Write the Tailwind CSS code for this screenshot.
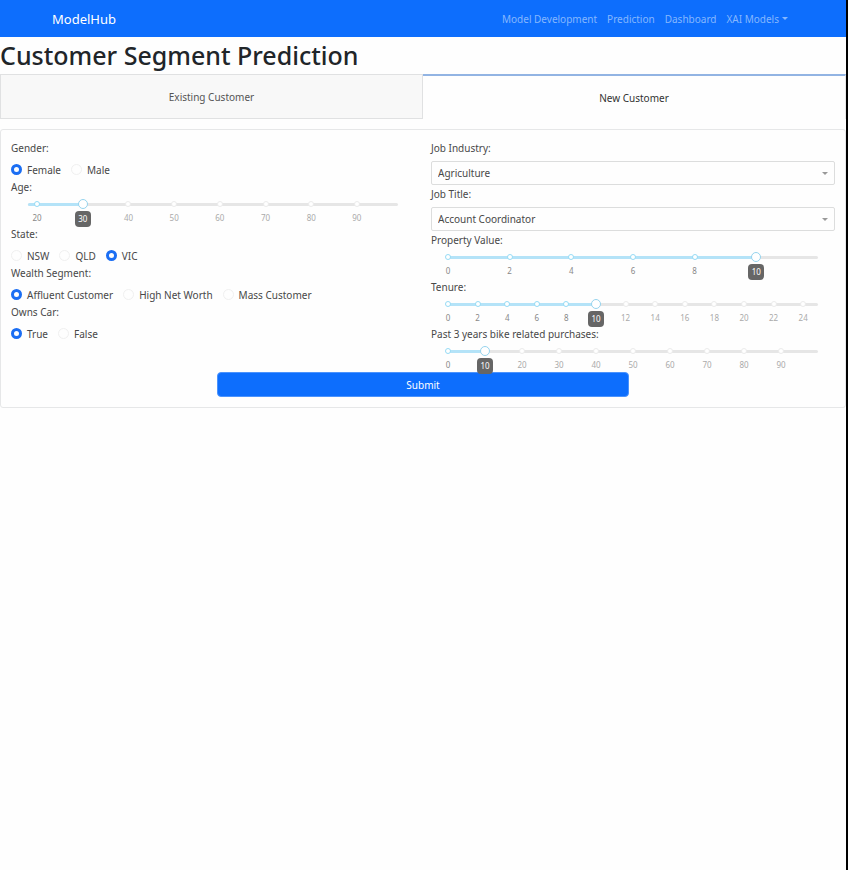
<!DOCTYPE html>
<html lang="en">
<head>
<meta charset="utf-8">
<meta name="viewport" content="width=device-width, initial-scale=1">
<title>ModelHub</title>
<script src="https://cdn.jsdelivr.net/npm/@tailwindcss/browser@4"></script>
</head>
<body class="min-h-screen border-r-2 border-black bg-[#fefefe] font-['Noto_Sans','Open_Sans',sans-serif] text-[10px] leading-[18px] text-[#484848]">
<header class="flex h-[37px] items-center justify-between bg-[#0d6efd] pr-[58px] pl-[52px]">
  <a href="#" class="text-[13px] text-white">ModelHub</a>
  <nav class="flex items-center gap-[10px] text-[#86b7fe]">
    <a href="#">Model Development</a>
    <a href="#">Prediction</a>
    <a href="#">Dashboard</a>
    <button type="button" class="flex items-center gap-[3px]">XAI Models
      <svg class="h-[3px] w-[6px]" viewBox="0 0 6 3" fill="currentColor" aria-hidden="true"><path d="M0 0h6L3 3z"/></svg>
    </button>
  </nav>
</header>
<main>
  <h1 class="h-[37px] text-[25px] leading-[37px] font-medium text-[#212529]">Customer Segment Prediction</h1>
  <div role="tablist" class="grid h-[45px] grid-cols-2">
    <button type="button" role="tab" aria-selected="false" class="border border-[#e0e1e2] bg-[#f8f8f8] text-[#555]">Existing Customer</button>
    <button type="button" role="tab" aria-selected="true" class="border-t-2 border-r border-t-[#92b4e3] border-r-[#e8e8e8] text-[#333]">New Customer</button>
  </div>
  <form class="mt-[10px] rounded-[3px] border border-[#e6e7e8] bg-[#fefefe] px-[10px] pt-[9px] pb-[10px]">
    <div class="grid grid-cols-2 gap-4">
      <div>
        <fieldset>
          <legend>Gender:</legend>
          <div class="mt-1 flex h-[17px] items-center gap-[10px]">
            <label class="flex items-center gap-[5px]"><input type="radio" name="gender" checked class="size-[11px] appearance-none rounded-full border border-[#f0f0f0] checked:border-[3px] checked:border-[#1b6ef3]">Female</label>
            <label class="flex items-center gap-[5px]"><input type="radio" name="gender" class="size-[11px] appearance-none rounded-full border border-[#f0f0f0] checked:border-[3px] checked:border-[#1b6ef3]">Male</label>
          </div>
        </fieldset>
        <div data-slider data-name="Age" data-min="18" data-max="99" data-value="30" data-marks="20,30,40,50,60,70,80,90"></div>
        <fieldset>
          <legend>State:</legend>
          <div class="mt-1 flex h-[17px] items-center gap-[10px]">
            <label class="flex items-center gap-[5px]"><input type="radio" name="state" class="size-[11px] appearance-none rounded-full border border-[#f0f0f0] checked:border-[3px] checked:border-[#1b6ef3]">NSW</label>
            <label class="flex items-center gap-[5px]"><input type="radio" name="state" class="size-[11px] appearance-none rounded-full border border-[#f0f0f0] checked:border-[3px] checked:border-[#1b6ef3]">QLD</label>
            <label class="flex items-center gap-[5px]"><input type="radio" name="state" checked class="size-[11px] appearance-none rounded-full border border-[#f0f0f0] checked:border-[3px] checked:border-[#1b6ef3]">VIC</label>
          </div>
        </fieldset>
        <fieldset>
          <legend>Wealth Segment:</legend>
          <div class="mt-1 flex h-[17px] items-center gap-[10px]">
            <label class="flex items-center gap-[5px]"><input type="radio" name="wealth" checked class="size-[11px] appearance-none rounded-full border border-[#f0f0f0] checked:border-[3px] checked:border-[#1b6ef3]">Affluent Customer</label>
            <label class="flex items-center gap-[5px]"><input type="radio" name="wealth" class="size-[11px] appearance-none rounded-full border border-[#f0f0f0] checked:border-[3px] checked:border-[#1b6ef3]">High Net Worth</label>
            <label class="flex items-center gap-[5px]"><input type="radio" name="wealth" class="size-[11px] appearance-none rounded-full border border-[#f0f0f0] checked:border-[3px] checked:border-[#1b6ef3]">Mass Customer</label>
          </div>
        </fieldset>
        <fieldset>
          <legend>Owns Car:</legend>
          <div class="mt-1 flex h-[17px] items-center gap-[10px]">
            <label class="flex items-center gap-[5px]"><input type="radio" name="car" checked class="size-[11px] appearance-none rounded-full border border-[#f0f0f0] checked:border-[3px] checked:border-[#1b6ef3]">True</label>
            <label class="flex items-center gap-[5px]"><input type="radio" name="car" class="size-[11px] appearance-none rounded-full border border-[#f0f0f0] checked:border-[3px] checked:border-[#1b6ef3]">False</label>
          </div>
        </fieldset>
      </div>
      <div>
        <label for="industry" class="block">Job Industry:</label>
        <div class="relative mt-1">
          <select id="industry" class="block h-[24px] w-full appearance-none rounded-[2px] border border-[#dcdddd] bg-[#fefefe] px-[6px]"><option>Agriculture</option></select>
          <svg class="pointer-events-none absolute top-[11px] right-[7px] h-[3px] w-[6px] text-[#999]" viewBox="0 0 6 3" fill="currentColor" aria-hidden="true"><path d="M0 0h6L3 3z"/></svg>
        </div>
        <label for="title" class="block">Job Title:</label>
        <div class="relative mt-1">
          <select id="title" class="block h-[24px] w-full appearance-none rounded-[2px] border border-[#dcdddd] bg-[#fefefe] px-[6px]"><option>Account Coordinator</option></select>
          <svg class="pointer-events-none absolute top-[11px] right-[7px] h-[3px] w-[6px] text-[#999]" viewBox="0 0 6 3" fill="currentColor" aria-hidden="true"><path d="M0 0h6L3 3z"/></svg>
        </div>
        <div data-slider data-name="Property Value" data-min="0" data-max="12" data-value="10" data-marks="0,2,4,6,8,10"></div>
        <div data-slider data-name="Tenure" data-min="0" data-max="25" data-value="10" data-marks="0,2,4,6,8,10,12,14,16,18,20,22,24"></div>
        <div data-slider data-name="Past 3 years bike related purchases" data-min="0" data-max="100" data-value="10" data-marks="0,10,20,30,40,50,60,70,80,90"></div>
      </div>
    </div>
    <button type="submit" class="mx-auto block h-[25px] w-1/2 rounded-[4px] border border-[#4b93fd] bg-[#0d6efd] text-white">Submit</button>
  </form>
</main>
<script>
// Builds each range slider with its rail, marks and value bubble.
document.querySelectorAll('[data-slider]').forEach((el, i) => {
  const { name, min, max, value, marks } = el.dataset;
  const pct = v => (v - min) / (max - min) * 100;
  const dots = marks.split(',').map(Number).filter(m => m !== +value).map(m => {
    const on = m <= +value;
    return `<span class="absolute top-[5px] size-[6px] -translate-x-1/2 rounded-full border bg-white ${on ? 'border-[#96dbf5]' : 'border-[#ebebeb]'}" style="left:${pct(m)}%"></span>
      <span class="absolute top-[16px] -translate-x-1/2 text-[8px] leading-[12px] ${on ? 'text-[#888]' : 'text-[#aaa]'}" style="left:${pct(m)}%">${m}</span>`;
  }).join('');
  el.innerHTML = `<label for="slider-${i}" class="block">${name}:</label>
    <div class="relative mx-[17px] h-[29px]">
      <div class="absolute inset-x-0 top-[7px] h-[3px] rounded-full bg-[#e6e6e6]"></div>
      <div class="absolute left-0 top-[7px] h-[3px] rounded-full bg-[#b4e3f8]" style="width:${pct(value)}%"></div>
      ${dots}
      <input id="slider-${i}" type="range" min="${min}" max="${max}" value="${value}" class="absolute top-[3px] -left-[5px] block h-[10px] w-[calc(100%+10px)] appearance-none bg-transparent [&::-webkit-slider-thumb]:size-[10px] [&::-webkit-slider-thumb]:appearance-none [&::-webkit-slider-thumb]:rounded-full [&::-webkit-slider-thumb]:border [&::-webkit-slider-thumb]:border-[#96d4ee] [&::-webkit-slider-thumb]:bg-white">
      <output for="slider-${i}" class="absolute top-[15px] z-10 size-[16px] -translate-x-1/2 rounded-[4px] bg-[#666] text-center text-[8px] leading-[16px] text-white" style="left:${pct(value)}%">${value}</output>
    </div>`;
});
</script>
</body>
</html>
